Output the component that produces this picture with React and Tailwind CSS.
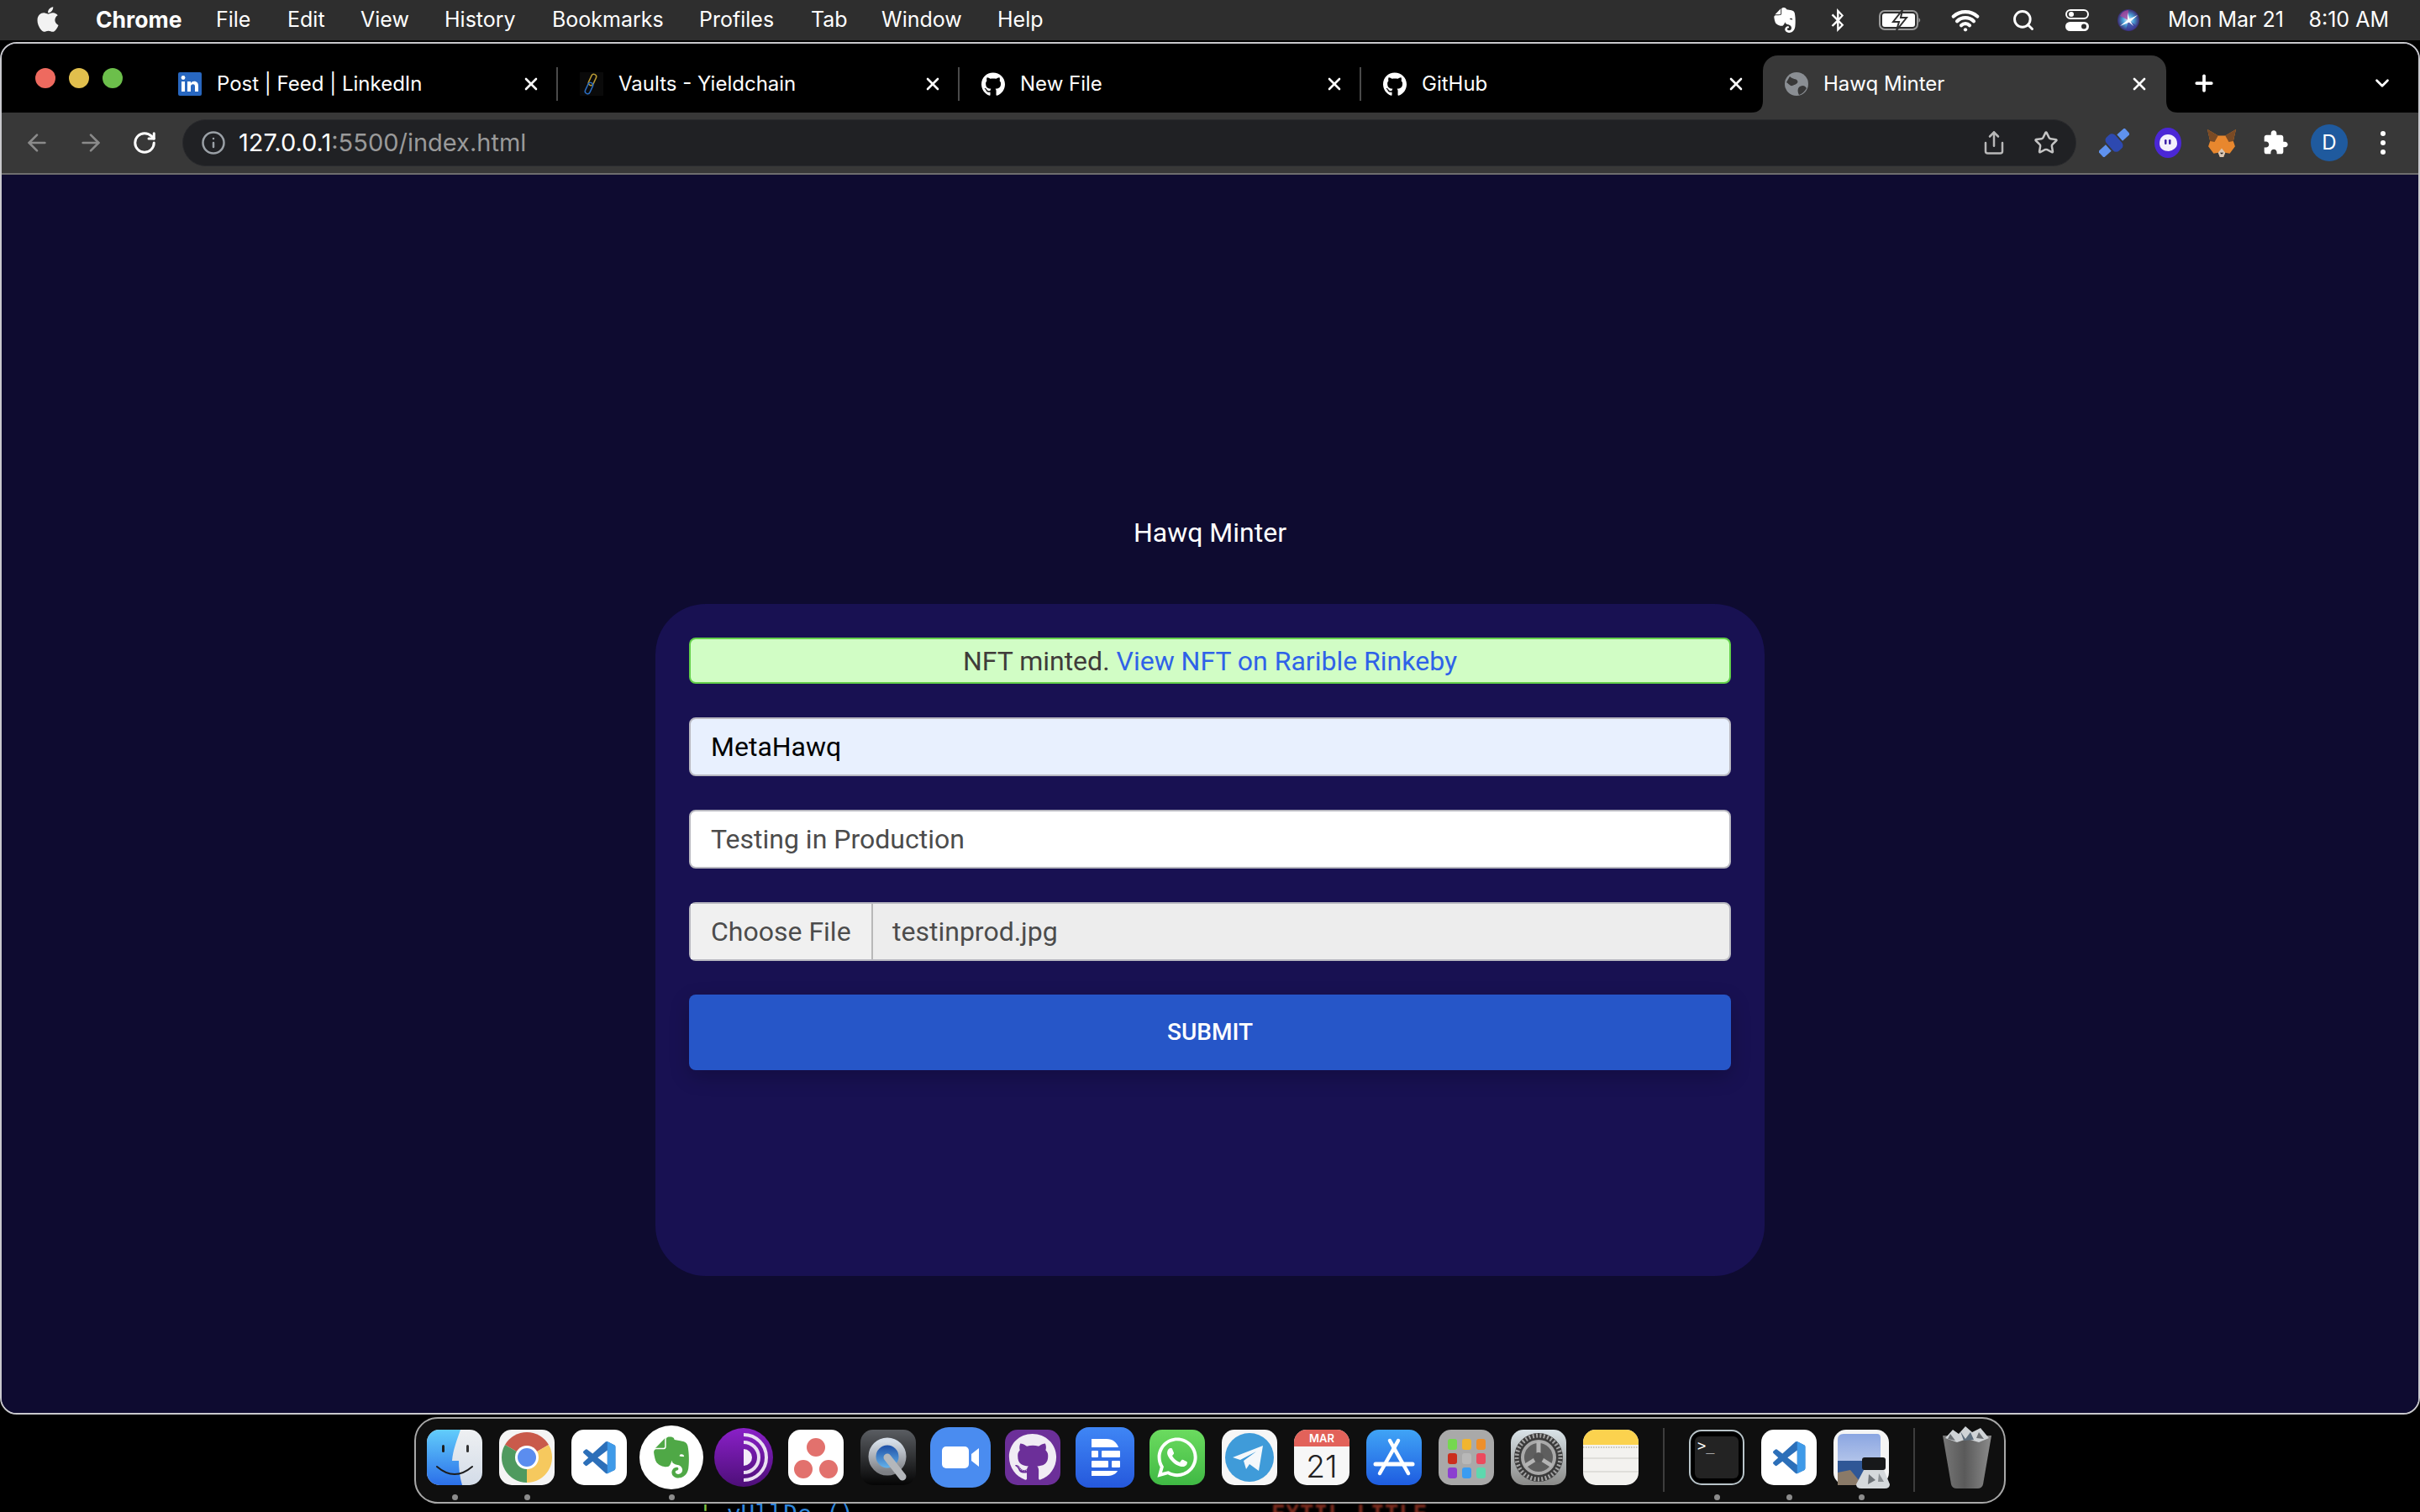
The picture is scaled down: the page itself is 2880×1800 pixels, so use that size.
import React from "react";
import { ArrowLeft, ArrowRight, RotateCw, Info, Share, Star, X, Plus, ChevronDown, Search, Wifi } from "lucide-react";
import { FaApple, FaEvernote, FaBluetoothB, FaGithub, FaWhatsapp } from "react-icons/fa";

const VS = "M23.15 2.587L18.21.21a1.494 1.494 0 0 0-1.705.29l-9.46 8.63-4.12-3.128a.999.999 0 0 0-1.276.057L.327 7.261A1 1 0 0 0 .326 8.74L3.899 12 .326 15.26a1 1 0 0 0 .001 1.479L1.65 17.94a.999.999 0 0 0 1.276.057l4.12-3.128 9.46 8.63a1.492 1.492 0 0 0 1.704.29l4.942-2.377A1.5 1.5 0 0 0 24 20.06V3.939a1.5 1.5 0 0 0-.85-1.352zm-5.146 14.861L10.826 12l7.178-5.448v10.896z";

const Box = ({ children, w = 66, h = 66 }) => (
  <svg width={w} height={h} viewBox={`0 0 ${w} ${h}`} className="block overflow-visible">{children}</svg>
);

const VsCode = () => (
  <Box>
    <rect width="66" height="66" rx="15" fill="#fff" />
    <g transform="translate(14 14) scale(1.6)">
      <path d={VS} fill="#2c6fb9" />
      <path d="M16.5.5a1.49 1.49 0 0 1 1.7-.3l4.95 2.38A1.5 1.5 0 0 1 24 3.94v16.12a1.5 1.5 0 0 1-.85 1.35l-4.95 2.38a1.49 1.49 0 0 1-1.7-.29c.55.55 1.5.2 1.5-.6V1.1c0-.8-.95-1.15-1.5-.6z" fill="#3f9ae8" />
    </g>
  </Box>
);

const Finder = () => (
  <Box>
    <defs>
      <linearGradient id="fb" x1="0" y1="0" x2="0" y2="1"><stop offset="0" stopColor="#62cdfb" /><stop offset="1" stopColor="#2b6fe9" /></linearGradient>
      <linearGradient id="fg" x1="0" y1="0" x2="0" y2="1"><stop offset="0" stopColor="#eef0f2" /><stop offset="1" stopColor="#d3dce8" /></linearGradient>
    </defs>
    <rect width="66" height="66" rx="15" fill="url(#fg)" />
    <path d="M15 0H40C36 12 31 24 30 37H38C38 46 39 56 42 66H15A15 15 0 0 1 0 51V15A15 15 0 0 1 15 0Z" fill="url(#fb)" />
    <rect x="18" y="18" width="3" height="9" rx="1.5" fill="#1c1c1c" />
    <rect x="47" y="18" width="3" height="9" rx="1.5" fill="#333" />
    <path d="M12 44Q33 62 54 44" fill="none" stroke="#1c1c1c" strokeWidth="2" strokeLinecap="round" />
  </Box>
);

const Chrome = () => (
  <Box>
    <rect width="66" height="66" rx="15" fill="#f4f4f4" />
    <path d="M33 33L59 18A30 30 0 0 0 7 18Z" fill="#c95a4b" />
    <path d="M33 33L33 63A30 30 0 0 0 59 18Z" fill="#f6c95e" />
    <path d="M33 33L7 18A30 30 0 0 0 33 63Z" fill="#4f9a5f" />
    <circle cx="33" cy="33" r="14" fill="#fff" />
    <circle cx="33" cy="33" r="11" fill="#5b8def" />
  </Box>
);

const Evernote = () => (
  <div className="flex h-[76px] w-[76px] items-center justify-center rounded-full bg-white">
    <FaEvernote size={56} color="#4fa846" />
  </div>
);

const Tor = () => (
  <Box w={70} h={70}>
    <defs><linearGradient id="tor" x1="0" y1="0" x2="0" y2="1"><stop offset="0" stopColor="#8a20c8" /><stop offset="1" stopColor="#4d0f78" /></linearGradient></defs>
    <circle cx="35" cy="35" r="35" fill="url(#tor)" />
    <path d="M35 8A27 27 0 0 1 35 62" fill="none" stroke="#eadff2" strokeWidth="4" />
    <path d="M35 17A18 18 0 0 1 35 53" fill="none" stroke="#eadff2" strokeWidth="4" />
    <path d="M35 25A10 10 0 0 1 35 45Z" fill="#f3ecf8" />
  </Box>
);

const Asana = () => (
  <Box>
    <rect width="66" height="66" rx="15" fill="#fff" />
    <circle cx="33" cy="21" r="11" fill="#e2716d" />
    <circle cx="18" cy="47" r="11" fill="#e2716d" />
    <circle cx="48" cy="47" r="11" fill="#e2716d" />
  </Box>
);

const QuickTime = () => (
  <Box>
    <defs>
      <linearGradient id="qt" x1="0" y1="0" x2="0" y2="1"><stop offset="0" stopColor="#5a5d62" /><stop offset="1" stopColor="#050505" /></linearGradient>
      <linearGradient id="qs" x1="0" y1="0" x2="0" y2="1"><stop offset="0" stopColor="#d6dee8" /><stop offset="1" stopColor="#7d7f84" /></linearGradient>
      <linearGradient id="qb" x1="0" y1="0" x2="0" y2="1"><stop offset="0" stopColor="#123f9c" /><stop offset="1" stopColor="#6fc2f5" /></linearGradient>
    </defs>
    <rect width="66" height="66" rx="15" fill="url(#qt)" />
    <circle cx="32" cy="32" r="18" fill="url(#qb)" stroke="url(#qs)" strokeWidth="9" />
    <path d="M32 33L50 56" stroke="#b4b7bb" strokeWidth="9" strokeLinecap="round" />
  </Box>
);

const Zoom = () => (
  <Box w={72} h={72}>
    <rect width="72" height="72" rx="22" fill="#4a8cf0" />
    <rect x="14" y="23" width="32" height="26" rx="5" fill="#fff" />
    <path d="M49 32L58 25V47L49 40Z" fill="#fff" />
  </Box>
);

const GitHubDock = () => (
  <div className="flex h-[66px] w-[66px] items-center justify-center rounded-[15px] bg-[#6c2f99]">
    <FaGithub size={58} color="#f0ecf4" />
  </div>
);

const Elementor = () => (
  <Box w={70} h={72}>
    <defs><linearGradient id="el" x1="0" y1="0" x2="0" y2="1"><stop offset="0" stopColor="#3f86f5" /><stop offset="1" stopColor="#2558dc" /></linearGradient></defs>
    <rect width="70" height="72" rx="16" fill="url(#el)" />
    <path d="M19 14H37C44 14 49 18 51 24H19Z" fill="#fff" />
    <rect x="19" y="28" width="8" height="8" rx="1" fill="#fff" />
    <rect x="31" y="28" width="22" height="8" rx="1" fill="#fff" />
    <rect x="19" y="40" width="20" height="8" rx="1" fill="#fff" />
    <rect x="43" y="40" width="10" height="8" rx="1" fill="#fff" />
    <path d="M19 52H50C48 56 43 58 37 58H19Z" fill="#fff" />
  </Box>
);

const WhatsApp = () => (
  <div className="flex h-[66px] w-[66px] items-center justify-center rounded-[15px] bg-gradient-to-b from-[#6bdb5f] to-[#3fb944]">
    <FaWhatsapp size={54} color="#fff" />
  </div>
);

const Telegram = () => (
  <Box>
    <rect width="66" height="66" rx="15" fill="#f6f6f6" />
    <circle cx="33" cy="33" r="29" fill="#3f9bd9" />
    <path d="M13 33L49 19L44 49L33 41L29 47L26 37L41 26L22 36Z" fill="#f4f8fb" />
  </Box>
);

const Calendar = () => (
  <Box>
    <rect width="66" height="66" rx="15" fill="#f7f7f7" />
    <path d="M15 0H51A15 15 0 0 1 66 15V20H0V15A15 15 0 0 1 15 0Z" fill="#e2625a" />
    <text x="33" y="15" textAnchor="middle" fontSize="13" fontWeight="600" fill="#fff" fontFamily="Inter, sans-serif">MAR</text>
    <text x="33" y="57" textAnchor="middle" fontSize="37" fontWeight="300" fill="#222" fontFamily="Inter, sans-serif">21</text>
  </Box>
);

const AppStore = () => (
  <Box>
    <defs><linearGradient id="as" x1="0" y1="0" x2="0" y2="1"><stop offset="0" stopColor="#40a4f6" /><stop offset="1" stopColor="#1e5ce0" /></linearGradient></defs>
    <rect width="66" height="66" rx="15" fill="url(#as)" />
    <g stroke="#fff" strokeLinecap="round" fill="none">
      <path d="M28 13L50 52" strokeWidth="4.5" />
      <path d="M38 13L16 52" strokeWidth="4.5" />
      <path d="M11 41H55" strokeWidth="5" />
    </g>
  </Box>
);

const Launchpad = () => {
  const colors = ["#75d84f", "#f1b52f", "#ee8f2a", "#cb2e1d", "#b8b8b8", "#ec4a5e", "#8b3fd0", "#3b9cf0", "#5ed8ae"];
  return (
    <Box>
      <rect width="66" height="66" rx="15" fill="#a9a9a9" />
      {colors.map((c, i) => (
        <rect key={c} x={11 + (i % 3) * 17} y={11 + Math.floor(i / 3) * 17} width="11" height="13" rx="3" fill={c} />
      ))}
    </Box>
  );
};

const SysPrefs = () => (
  <Box>
    <defs><linearGradient id="sp" x1="0" y1="0" x2="0" y2="1"><stop offset="0" stopColor="#d9e3e8" /><stop offset="1" stopColor="#8a8a88" /></linearGradient></defs>
    <rect width="66" height="66" rx="15" fill="url(#sp)" />
    <circle cx="33" cy="33" r="29" fill="#3b3b3b" />
    <circle cx="33" cy="33" r="26" fill="none" stroke="#a5a5a5" strokeWidth="5" strokeDasharray="2 2.4" />
    <circle cx="33" cy="33" r="19" fill="#5e5e5e" stroke="#a9a9a9" strokeWidth="4" />
    <path d="M33 33V14M33 33L17 43M33 33L49 43" stroke="#b4b4b4" strokeWidth="5" />
    <circle cx="33" cy="33" r="6" fill="#585858" />
  </Box>
);

const Notes = () => (
  <Box>
    <rect width="66" height="66" rx="15" fill="#f3f2ef" />
    <path d="M15 0H51A15 15 0 0 1 66 15V18H0V15A15 15 0 0 1 15 0Z" fill="#fbd24e" />
    <path d="M0 21H66" stroke="#c9c5ba" strokeWidth="2" strokeDasharray="1.5 1.5" />
    <path d="M0 34H66M0 50H66" stroke="#d9d8d4" strokeWidth="1.5" />
  </Box>
);

const Terminal = () => (
  <Box>
    <rect x="1" y="1" width="64" height="64" rx="14" fill="#000" stroke="#b8c4c9" strokeWidth="2" />
    <rect x="7" y="8" width="52" height="50" rx="6" fill="#232323" />
    <text x="10" y="25" fontSize="17" fill="#fff" fontFamily="'DejaVu Sans Mono', monospace">&gt;_</text>
  </Box>
);

const Preview = () => (
  <Box>
    <defs><linearGradient id="pv" x1="0" y1="0" x2="0" y2="1"><stop offset="0" stopColor="#8ba6e2" /><stop offset="1" stopColor="#d2dcef" /></linearGradient></defs>
    <rect width="66" height="66" rx="15" fill="#f5f5f5" />
    <path d="M12 5H52Q56 5 56 10V66H5V12Q5 5 12 5Z" fill="url(#pv)" />
    <path d="M5 37H56V66H5Z" fill="#2f5796" />
    <path d="M5 51L20 48L30 60L28 66H5Z" fill="#8a7a68" />
    <rect x="34" y="33" width="28" height="15" rx="3" fill="#17181a" />
    <path d="M36 48H60L67 65Q67 70 61 70H33Q27 70 27 65Z" fill="#d5d9dc" />
    <path d="M42 53L50 60L41 65Z" fill="#6e7378" />
    <path d="M54 52L60 62H53Z" fill="#8d9296" />
  </Box>
);

const Trash = () => (
  <Box w={60} h={76}>
    <defs><linearGradient id="tr" x1="0" y1="0" x2="1" y2="0"><stop offset="0" stopColor="#777" /><stop offset=".45" stopColor="#5a5a5a" /><stop offset="1" stopColor="#8b8b8b" /></linearGradient></defs>
    <path d="M1 12L11 70Q12 75 18 75H42Q48 75 49 70L59 12Z" fill="url(#tr)" />
    <path d="M4 15L13 5L20 10L28 1L36 8L46 3L56 15L44 20L30 16L18 20Z" fill="#cfd3d6" />
    <path d="M22 7L28 16L34 8L38 17L26 18Z" fill="#5d6d7c" />
    <path d="M10 10L16 18L7 16ZM44 8L50 16L41 15Z" fill="#6c7074" />
  </Box>
);

const dockA = [
  [Finder, true], [Chrome, true], [VsCode, false], [Evernote, true], [Tor, false], [Asana, false], [QuickTime, false],
  [Zoom, false], [GitHubDock, false], [Elementor, false], [WhatsApp, false], [Telegram, false], [Calendar, false],
  [AppStore, false], [Launchpad, false], [SysPrefs, false], [Notes, false],
];
const dockB = [[Terminal, true], [VsCode, true], [Preview, true]];

const DockCell = ({ Icon, on }) => (
  <div className="flex w-[86px] flex-none flex-col items-center pt-[8px]">
    <div className="flex h-[76px] w-[76px] items-center justify-center"><Icon /></div>
    {on && <div className="mt-[6px] h-[7px] w-[7px] rounded-full bg-[#8c8c8c]" />}
  </div>
);

const DockSep = () => (
  <div className="flex h-full w-[40px] flex-none justify-center pt-[11px]">
    <div className="h-[76px] w-[2px] bg-[#3d3d3d]" />
  </div>
);

const menus = [
  ["File", "w-[85px]"], ["Edit", "w-[87px]"], ["View", "w-[100px]"], ["History", "w-[128px]"], ["Bookmarks", "w-[175px]"],
  ["Profiles", "w-[133px]"], ["Tab", "w-[84px]"], ["Window", "w-[138px]"], ["Help", "w-[80px]"],
];

const MenuBar = () => (
  <div className="flex h-[48px] flex-none items-center bg-[#2e2e2e] text-[25px] text-white">
    <div className="ml-[40px] flex w-[74px] flex-none"><FaApple size={34} color="#f2f2f2" className="-mt-[3px]" /></div>
    <div className="w-[143px] flex-none text-[26.5px] font-bold">Chrome</div>
    {menus.map(([m, w]) => <div key={m} className={`${w} flex-none`}>{m}</div>)}
    <div className="ml-auto flex items-center pr-[37px]">
      <div className="flex w-[48px] justify-center"><FaEvernote size={34} /></div>
      <div className="flex w-[78px] justify-center"><FaBluetoothB size={28} /></div>
      <div className="flex w-[72px] justify-center">
        <svg width="52" height="24" viewBox="0 0 52 24">
          <rect x="1" y="1" width="45" height="22" rx="6" fill="none" stroke="#9a9a9a" strokeWidth="2" />
          <rect x="4" y="4" width="39" height="16" rx="3" fill="#fff" />
          <path d="M47.500 9Q51 12 47.500 15Z" fill="#9a9a9a" />
          <path d="M28 0L17 14H24L21 24L33 9H26Z" fill="#fff" stroke="#2e2e2e" strokeWidth="2" />
        </svg>
      </div>
      <div className="flex w-[82px] justify-center"><Wifi size={34} strokeWidth={3} /></div>
      <div className="flex w-[56px] justify-center"><Search size={28} strokeWidth={2.5} /></div>
      <div className="flex w-[72px] justify-center">
        <svg width="28" height="26" viewBox="0 0 28 26">
          <rect x="1" y="1" width="26" height="10" rx="5" fill="none" stroke="#fff" strokeWidth="2" />
          <circle cx="7" cy="6" r="3" fill="#fff" />
          <rect y="15" width="28" height="11" rx="5.500" fill="#fff" />
          <circle cx="22" cy="20.500" r="3" fill="#2e2e2e" />
        </svg>
      </div>
      <div className="flex w-[50px] justify-center">
        <svg width="26" height="26" viewBox="0 0 26 26">
          <defs>
            <radialGradient id="siri"><stop offset="0" stopColor="#dff3ff" /><stop offset=".5" stopColor="#4aa0d8" /><stop offset="1" stopColor="#3a2a70" /></radialGradient>
          </defs>
          <circle cx="13" cy="13" r="13" fill="url(#siri)" />
          <path d="M13 13L3 8A12 12 0 0 1 13 1Z" fill="#b0409a" opacity=".75" />
          <path d="M13 13L23 20A12 12 0 0 1 10 25Z" fill="#3d3a9a" opacity=".7" />
          <path d="M3 20L13 12L24 7L15 15Z" fill="#fff" />
          <path d="M12 4L14 12L19 20L12 14Z" fill="#fff" />
        </svg>
      </div>
      <div className="ml-[22px] flex w-[263px] justify-between whitespace-nowrap text-[25px]"><span>Mon Mar 21</span><span>8:10 AM</span></div>
    </div>
  </div>
);

const LinkedIn = () => (
  <svg width="28" height="28" viewBox="0 0 28 28">
    <rect width="28" height="28" rx="2" fill="#2867c0" />
    <rect x="4" y="11" width="4" height="12" fill="#fff" />
    <circle cx="6" cy="6.500" r="2.400" fill="#fff" />
    <path d="M11 11H15V13C16 11.500 17.500 10.700 19 10.700C22.500 10.700 24 13 24 16V23H20V17C20 15.300 19.300 14.300 17.800 14.300C16.200 14.300 15 15.300 15 17V23H11Z" fill="#fff" />
  </svg>
);

const Chain = () => (
  <svg width="28" height="28" viewBox="0 0 28 28">
    <rect width="28" height="28" fill="#0a0a0a" />
    <rect x="12" y="2" width="6" height="14" rx="3" transform="rotate(25 15 9)" fill="none" stroke="#b99a34" strokeWidth="1.500" />
    <rect x="8" y="12" width="6" height="14" rx="3" transform="rotate(25 11 19)" fill="none" stroke="#2a6cc0" strokeWidth="1.500" />
  </svg>
);

const GlobeFav = () => (
  <svg width="28" height="28" viewBox="0 0 28 28">
    <circle cx="14" cy="14" r="14" fill="#8a8e93" />
    <path d="M6 5C10 9 13 7 15 10C17 13 12 15 9 16C7 17 4 13 2 12ZM18 17C22 15 24 16 26 19C24 23 20 26 17 27C15 23 15 19 18 17Z" fill="#383838" />
  </svg>
);

const tabs = [
  [<LinkedIn />, "Post | Feed | LinkedIn", true],
  [<Chain />, "Vaults - Yieldchain", true],
  [<FaGithub size={33} color="#fff" />, "New File", true],
  [<FaGithub size={33} color="#fff" />, "GitHub", false],
];

const Tab = ({ icon, title, sep, active }) => (
  <div className={`relative flex h-[68px] w-[478px] flex-none items-center pl-[26px] ${active ? "w-[480px] rounded-t-[18px] bg-[#383838]" : ""}`}>
    <div className="flex w-[28px] flex-none justify-center">{icon}</div>
    <div className="ml-[18px] flex-1 whitespace-nowrap text-[24px] text-white">{title}</div>
    <X size={24} strokeWidth={2.6} color="#fff" className="flex-none" />
    <div className={`ml-[18px] h-[40px] w-[2px] flex-none ${sep ? "bg-[#4a4a4a]" : "bg-transparent"}`} />
    {active && (
      <>
        <svg width="14" height="14" viewBox="0 0 14 14" className="absolute bottom-0 -left-[14px]"><path d="M14 0V14H0Q14 14 14 0Z" fill="#383838" /></svg>
        <svg width="14" height="14" viewBox="0 0 14 14" className="absolute bottom-0 -right-[14px]"><path d="M0 0V14H14Q0 14 0 0Z" fill="#383838" /></svg>
      </>
    )}
  </div>
);

const TabStrip = () => (
  <div className="flex h-[82px] flex-none bg-black">
    <div className="flex w-[184px] flex-none items-center gap-[16px] pl-[40px]">
      <div className="h-[24px] w-[24px] rounded-full bg-[#ee6a5f]" />
      <div className="h-[24px] w-[24px] rounded-full bg-[#e1bf4d]" />
      <div className="h-[24px] w-[24px] rounded-full bg-[#6cbf4b]" />
    </div>
    <div className="flex flex-1 items-end">
      {tabs.map(([icon, title, sep]) => <Tab key={title} icon={icon} title={title} sep={sep} />)}
      <Tab icon={<GlobeFav />} title="Hawq Minter" active />
      <div className="mb-[20px] ml-[30px] flex-none"><Plus size={30} strokeWidth={3} color="#fff" /></div>
      <div className="mb-[22px] ml-auto mr-[30px] flex-none"><ChevronDown size={26} strokeWidth={2.5} color="#fff" /></div>
    </div>
  </div>
);

const Satellite = () => (
  <svg width="36" height="34" viewBox="0 0 36 34">
    <g transform="rotate(-42 18 17)">
      <rect x="-3" y="12" width="12" height="10" fill="#5f92ee" />
      <rect x="27" y="12" width="12" height="10" fill="#5f92ee" />
      <rect x="11" y="6" width="14" height="22" rx="5" fill="#2d49b0" />
    </g>
  </svg>
);

const Phantom = () => (
  <svg width="32" height="36" viewBox="0 0 32 36">
    <ellipse cx="16" cy="18" rx="16" ry="18" fill="#4b27d6" />
    <path d="M6 19C6 12 10 8 16 8C22 8 27 12 27 19C27 24 22 27 17 28C11 28 6 25 6 19Z" fill="#f3f0fb" />
    <rect x="12" y="14" width="2.500" height="6" rx="1.200" fill="#3b21a8" />
    <rect x="17" y="14" width="2.500" height="6" rx="1.200" fill="#3b21a8" />
  </svg>
);

const Fox = () => (
  <svg width="34" height="34" viewBox="0 0 32 32">
    <path d="M0 1L12 8H20L32 1L29 14L31 20L25 28L20 27L18 32H14L12 27L7 28L1 20L3 14Z" fill="#e8872e" />
    <path d="M0 1L12 8L8 15L3 14ZM32 1L20 8L24 15L29 14Z" fill="#7a4a24" />
    <path d="M12 27L16 22L20 27L18 32H14Z" fill="#d8c6b4" />
    <path d="M14 27H18L16 29Z" fill="#222" />
  </svg>
);

const Puzzle = () => (
  <svg width="32" height="32" viewBox="0 0 24 24" fill="#fff">
    <path d="M20.5 11H19V7c0-1.100-.9-2-2-2h-4V3.500C13 2.120 11.880 1 10.500 1S8 2.120 8 3.500V5H4c-1.100 0-1.990.9-1.990 2v3.800H3.500c1.490 0 2.700 1.210 2.700 2.700s-1.210 2.700-2.700 2.700H2V20c0 1.100.9 2 2 2h3.800v-1.500c0-1.490 1.210-2.700 2.700-2.700 1.490 0 2.700 1.210 2.700 2.700V22H17c1.100 0 2-.9 2-2v-4h1.500c1.380 0 2.500-1.120 2.500-2.500S21.880 11 20.500 11z" />
  </svg>
);

const Toolbar = () => (
  <div className="flex h-[72px] flex-none items-center bg-[#383838]">
    <div className="ml-[24px] flex w-[36px] justify-center"><ArrowLeft size={32} strokeWidth={2} color="#8a8a8a" /></div>
    <div className="ml-[28px] flex w-[36px] justify-center"><ArrowRight size={32} strokeWidth={2} color="#8a8a8a" /></div>
    <div className="ml-[28px] flex w-[36px] justify-center"><RotateCw size={30} strokeWidth={2.4} color="#fff" /></div>
    <div className="ml-[27px] flex h-[56px] w-[2254px] flex-none items-center rounded-full border border-[#2a2b2e] bg-[#202124] pl-[21px] pr-[20px]">
      <Info size={30} strokeWidth={2} color="#9aa0a6" />
      <div className="ml-[15px] whitespace-nowrap text-[29px] text-white">127.0.0.1<span className="text-[#9a9a9a]">:5500/index.html</span></div>
      <div className="ml-auto flex items-center gap-[32px]">
        <Share size={30} strokeWidth={2} color="#b8b8b8" />
        <Star size={30} strokeWidth={2} color="#c4c4c4" />
      </div>
    </div>
    <div className="ml-[13px] flex w-[64px] justify-center"><Satellite /></div>
    <div className="flex w-[64px] justify-center"><Phantom /></div>
    <div className="flex w-[64px] justify-center"><Fox /></div>
    <div className="flex w-[64px] justify-center"><Puzzle /></div>
    <div className="flex w-[64px] justify-center">
      <div className="flex h-[44px] w-[44px] items-center justify-center rounded-full bg-[#1f5a9e] text-[24px] text-white">D</div>
    </div>
    <div className="flex w-[64px] flex-col items-center gap-[5px]">
      <div className="h-[6px] w-[6px] rounded-full bg-white" />
      <div className="h-[6px] w-[6px] rounded-full bg-white" />
      <div className="h-[6px] w-[6px] rounded-full bg-white" />
    </div>
  </div>
);

const Page = () => (
  <div className="flex flex-1 flex-col items-center bg-[#0e0b30] pt-[402px] font-['Roboto',sans-serif]">
    <div className="h-[48px] text-[32px] leading-[48px] text-white">Hawq Minter</div>
    <div className="mt-[61px] flex h-[800px] w-[1320px] flex-col gap-[40px] rounded-[60px] bg-[#181152] p-[40px]">
      <div className="flex h-[55px] flex-none items-center justify-center rounded-[8px] border-2 border-[#63d04a] bg-[#d1fdc5] text-[32px] text-[#403c3a]">
        <span>NFT minted.&nbsp;</span><a className="text-[#2f62e8]">View NFT on Rarible Rinkeby</a>
      </div>
      <div className="flex h-[70px] flex-none items-center rounded-[8px] border-2 border-[#b8b8c0] bg-[#e8f0fe] pl-[24px] text-[32px] text-black">MetaHawq</div>
      <div className="flex h-[70px] flex-none items-center rounded-[8px] border-2 border-[#b8b8c0] bg-white pl-[24px] text-[32px] text-[#4c4c4c]">Testing in Production</div>
      <div className="flex h-[70px] flex-none items-center rounded-[8px] border-2 border-[#b8b8c0] bg-[#ededed] text-[32px] text-[#4c4c4c]">
        <div className="flex h-full w-[217px] flex-none items-center border-r-2 border-[#b8b8b8] bg-[#f0f0f0] pl-[24px]">Choose File</div>
        <div className="pl-[23px]">testinprod.jpg</div>
      </div>
      <div className="flex h-[90px] flex-none items-center justify-center rounded-[8px] bg-[#2656c8] text-[28px] font-medium text-white shadow-[0_8px_24px_rgba(0,0,0,0.2)]">SUBMIT</div>
    </div>
  </div>
);

export default function App() {
  return (
    <div className="flex h-[1800px] w-[2880px] flex-col overflow-hidden bg-black font-['Inter',sans-serif]">
      <MenuBar />
      <div className="mt-[2px] flex h-[1634px] flex-none flex-col overflow-hidden rounded-[20px] border-2 border-[#c9c9cd] bg-[#0e0b30]">
        <TabStrip />
        <Toolbar />
        <div className="h-[2px] flex-none bg-[#6e6e6e]" />
        <Page />
      </div>
      <div className="ml-[493px] mt-[3px] flex h-[103px] w-[1894px] flex-none rounded-[28px] border-2 border-[#a8a8a8] bg-[#0f0f0f] pl-[3px]">
        {dockA.map(([I, on], i) => <DockCell key={i} Icon={I} on={on} />)}
        <DockSep />
        {dockB.map(([I, on], i) => <DockCell key={i} Icon={I} on={on} />)}
        <DockSep />
        <DockCell Icon={Trash} on={false} />
      </div>
      <div className="flex h-[10px] flex-none overflow-hidden font-['DejaVu_Sans_Mono',monospace] text-[28px] leading-[26px]">
        <span className="ml-[831px] w-[682px] flex-none whitespace-nowrap text-[#2f86dc]"><span className="text-[#7fc241]">'</span> yUllDe ()</span>
        <span className="flex-none whitespace-nowrap font-bold text-[#7a2a1c] blur-[1px]">EXTIL LITLE</span>
      </div>
    </div>
  );
}
